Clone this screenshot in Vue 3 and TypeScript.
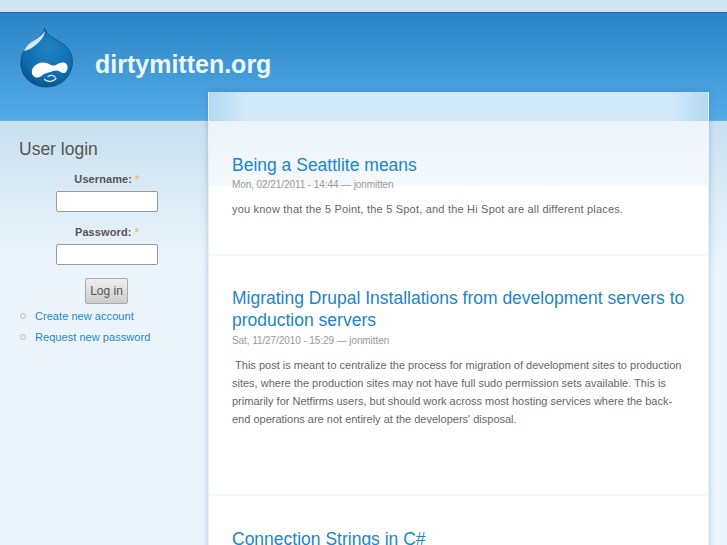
<script setup lang="ts">
interface Post { title: string; meta: string; lines: string; tight?: boolean; }
const posts: Post[] = [
  { title: 'Being a Seattlite means', meta: 'Mon, 02/21/2011 - 14:44 — jonmitten', lines: 'you know that the 5 Point, the 5 Spot, and the Hi Spot are all different places.' },
  { title: 'Migrating Drupal Installations from development servers to production servers', meta: 'Sat, 11/27/2010 - 15:29 — jonmitten', lines: '\u00a0This post is meant to centralize the process for migration of development sites to production sites, where the production sites may not have full sudo permission sets available. This is primarily for Netfirms users, but should work across most hosting services where the back-end operations are not entirely at the developers\' disposal.', tight: true },
  { title: 'Connection Strings in C#', meta: '', lines: '' },
];
</script>

<template>
  <div class="page">
    <div class="topband"></div>
    <header class="masthead">
      <svg class="logo" width="54" height="60" viewBox="0 0 54 60">
        <defs>
          <radialGradient id="drop" cx="0.55" cy="0.35" r="0.72">
            <stop offset="0" stop-color="#1f82c4" />
            <stop offset="0.7" stop-color="#0f6cae" />
            <stop offset="1" stop-color="#0a4a80" />
          </radialGradient>
        </defs>
        <path d="M24.500 0.500C24.500 5 19 9 14 13C6 18.500 0.800 25 0.800 34.500C0.800 49 12 59 26.500 59C41 59 52.500 48 52.500 33.500C52.500 20 42 15 34 10.500C29 7.500 25.800 4 24.500 0.500Z" fill="url(#drop)" stroke="#0c4f87" stroke-width="0.800" />
        <path d="M24.500 3C23 8 14 12 9 16C7 18 5 20 4 23C10 22 15 18 19 14C23 10 25 6 24.500 3Z" fill="#d4e9f6" />
        <path d="M13.500 48C11 46 11.500 41 14 38.500C17 35 23 33 28 35.500C31 37 33 38.500 36 37C39 35 44 33 46.500 36C48.500 39 47.500 44 44.500 45C41.500 45.500 39.500 42.500 36.500 42.500C33.500 42.500 31.500 44 28.500 44.500C25 45.500 22 47 20.500 48.500C18.500 50 15.500 50 13.500 48Z" fill="#fff" />
        <path d="M24.500 51.500C28 54.500 33 54 36 50.500M28 48.500C30.500 47 33.500 47.500 35 49" fill="none" stroke="#e6f2fa" stroke-width="1.300" stroke-linecap="round" />
      </svg>
      <a class="sitename">dirtymitten.org</a>
    </header>
    <div class="columns">
      <aside class="sidebar">
        <h2 class="block-title">User login</h2>
        <form class="login" @submit.prevent>
          <label class="label">Username: <span class="req">*</span></label>
          <input class="field" type="text" />
          <label class="label second">Password: <span class="req">*</span></label>
          <input class="field" type="password" />
          <button class="submit" type="button">Log in</button>
        </form>
        <ul class="links">
          <li><a>Create new account</a></li>
          <li><a>Request new password</a></li>
        </ul>
      </aside>
      <main class="card">
        <div class="card-head"></div>
        <div class="card-glow"></div>
        <article v-for="p in posts" :key="p.title" class="post">
          <h2 class="post-title">{{ p.title }}</h2>
          <div v-if="p.meta" class="meta">{{ p.meta }}</div>
          <p v-if="p.lines" class="body" :class="{ tight: p.tight }">{{ p.lines }}</p>
        </article>
      </main>
    </div>
  </div>
</template>

<style>
html, body { margin: 0; background: #edf5fc; overflow: hidden; }
</style>

<style scoped>
.page { width: 727px; height: 545px; overflow: hidden; font-family: "Liberation Sans", Arial, sans-serif; background: #edf5fc; }
.topband { height: 12px; background: #cfe3f0; }
.masthead {
  height: 107px;
  border-top: 1px solid #2462b4;
  border-bottom: 1px solid #62b4f0;
  background: linear-gradient(#2a84c3, #55abe8);
  display: flex;
  align-items: flex-start;
}
.logo { margin: 15px 0 0 20px; flex: none; }
.sitename { margin: 36px 0 0 21px; font-size: 25px; line-height: 30px; font-weight: 700; color: #eef6fc; }
.columns { display: flex; align-items: flex-start; background: linear-gradient(#c8e0ef, #edf5fc 150px); height: 425px; }
.sidebar { width: 208px; flex: none; box-sizing: border-box; padding-top: 18px; }
.block-title { margin: 0 0 0 19px; font-size: 17.500px; line-height: 21px; font-weight: 400; color: #555; }
.login { display: flex; flex-direction: column; align-items: center; margin: 12px 0 0 6px; }
.label { font-size: 11px; line-height: 14px; font-weight: 700; color: #555; letter-spacing: 0.100px; }
.label.second { margin-top: 13px; }
.req { color: #f5c060; }
.field { box-sizing: border-box; width: 102px; height: 21px; margin: 5px 0 0; padding: 0; border: 1px solid #9a9a9a; border-radius: 2px; background: #fff; }
.submit { box-sizing: border-box; width: 43px; height: 26px; margin: 13px 1px 0 0; padding: 0; border: 1px solid #aaa; border-radius: 2px; background: linear-gradient(#eee, #ccc); color: #555; font: 12px/1 "Liberation Sans", Arial, sans-serif; }
.links { list-style: none; margin: 2px 0 0; padding: 0 0 0 35px; }
.links li { position: relative; font-size: 11px; line-height: 21px; letter-spacing: 0.050px; color: #1c85cc; }
.links li::before { content: ""; position: absolute; left: -15px; top: 7px; width: 6px; height: 6px; border-radius: 50%; background: #eee; border: 1px solid #c4c4c4; box-sizing: border-box; }
.card {
  position: relative;
  box-sizing: border-box;
  width: 501px;
  margin-top: -29px;
  flex: none;
  background: #fff;
  border-left: 1px solid #e9f3fb;
  border-right: 1px solid #e9f3fb;
  box-shadow: 0 0 6px rgba(30, 90, 150, 0.300);
}
.card-head {
  height: 29px;
  background:
    linear-gradient(90deg, #b5d8f2, rgba(181, 216, 242, 0) 37px),
    linear-gradient(270deg, #b5d8f2, rgba(181, 216, 242, 0) 37px),
    #d2e9f9;
}
.card-glow { position: absolute; left: 0; right: 0; top: 29px; height: 65px; background: linear-gradient(#ecf4fb, #f4f9fd); }
.post { position: relative; padding: 33px 22px 0 23px; border-bottom: 2px solid #f2f8fc; }
.post:first-of-type { height: 100px; }
.post:nth-of-type(2) { padding-top: 31px; height: 207px; }
.post:nth-of-type(3) { padding-top: 32px; }
.post-title { margin: 0; font-size: 17.500px; line-height: 22px; font-weight: 400; color: #1c85cc; }
.meta { margin-top: 3px; font-size: 10px; line-height: 12px; color: #999; letter-spacing: -0.080px; }
.post:nth-of-type(2) .meta { margin-top: 4px; }
.body { margin: 9px 0 0; font-size: 11px; line-height: 18px; color: #666; letter-spacing: 0.200px; }
.body.tight { margin-top: 9px; letter-spacing: 0; }
</style>
